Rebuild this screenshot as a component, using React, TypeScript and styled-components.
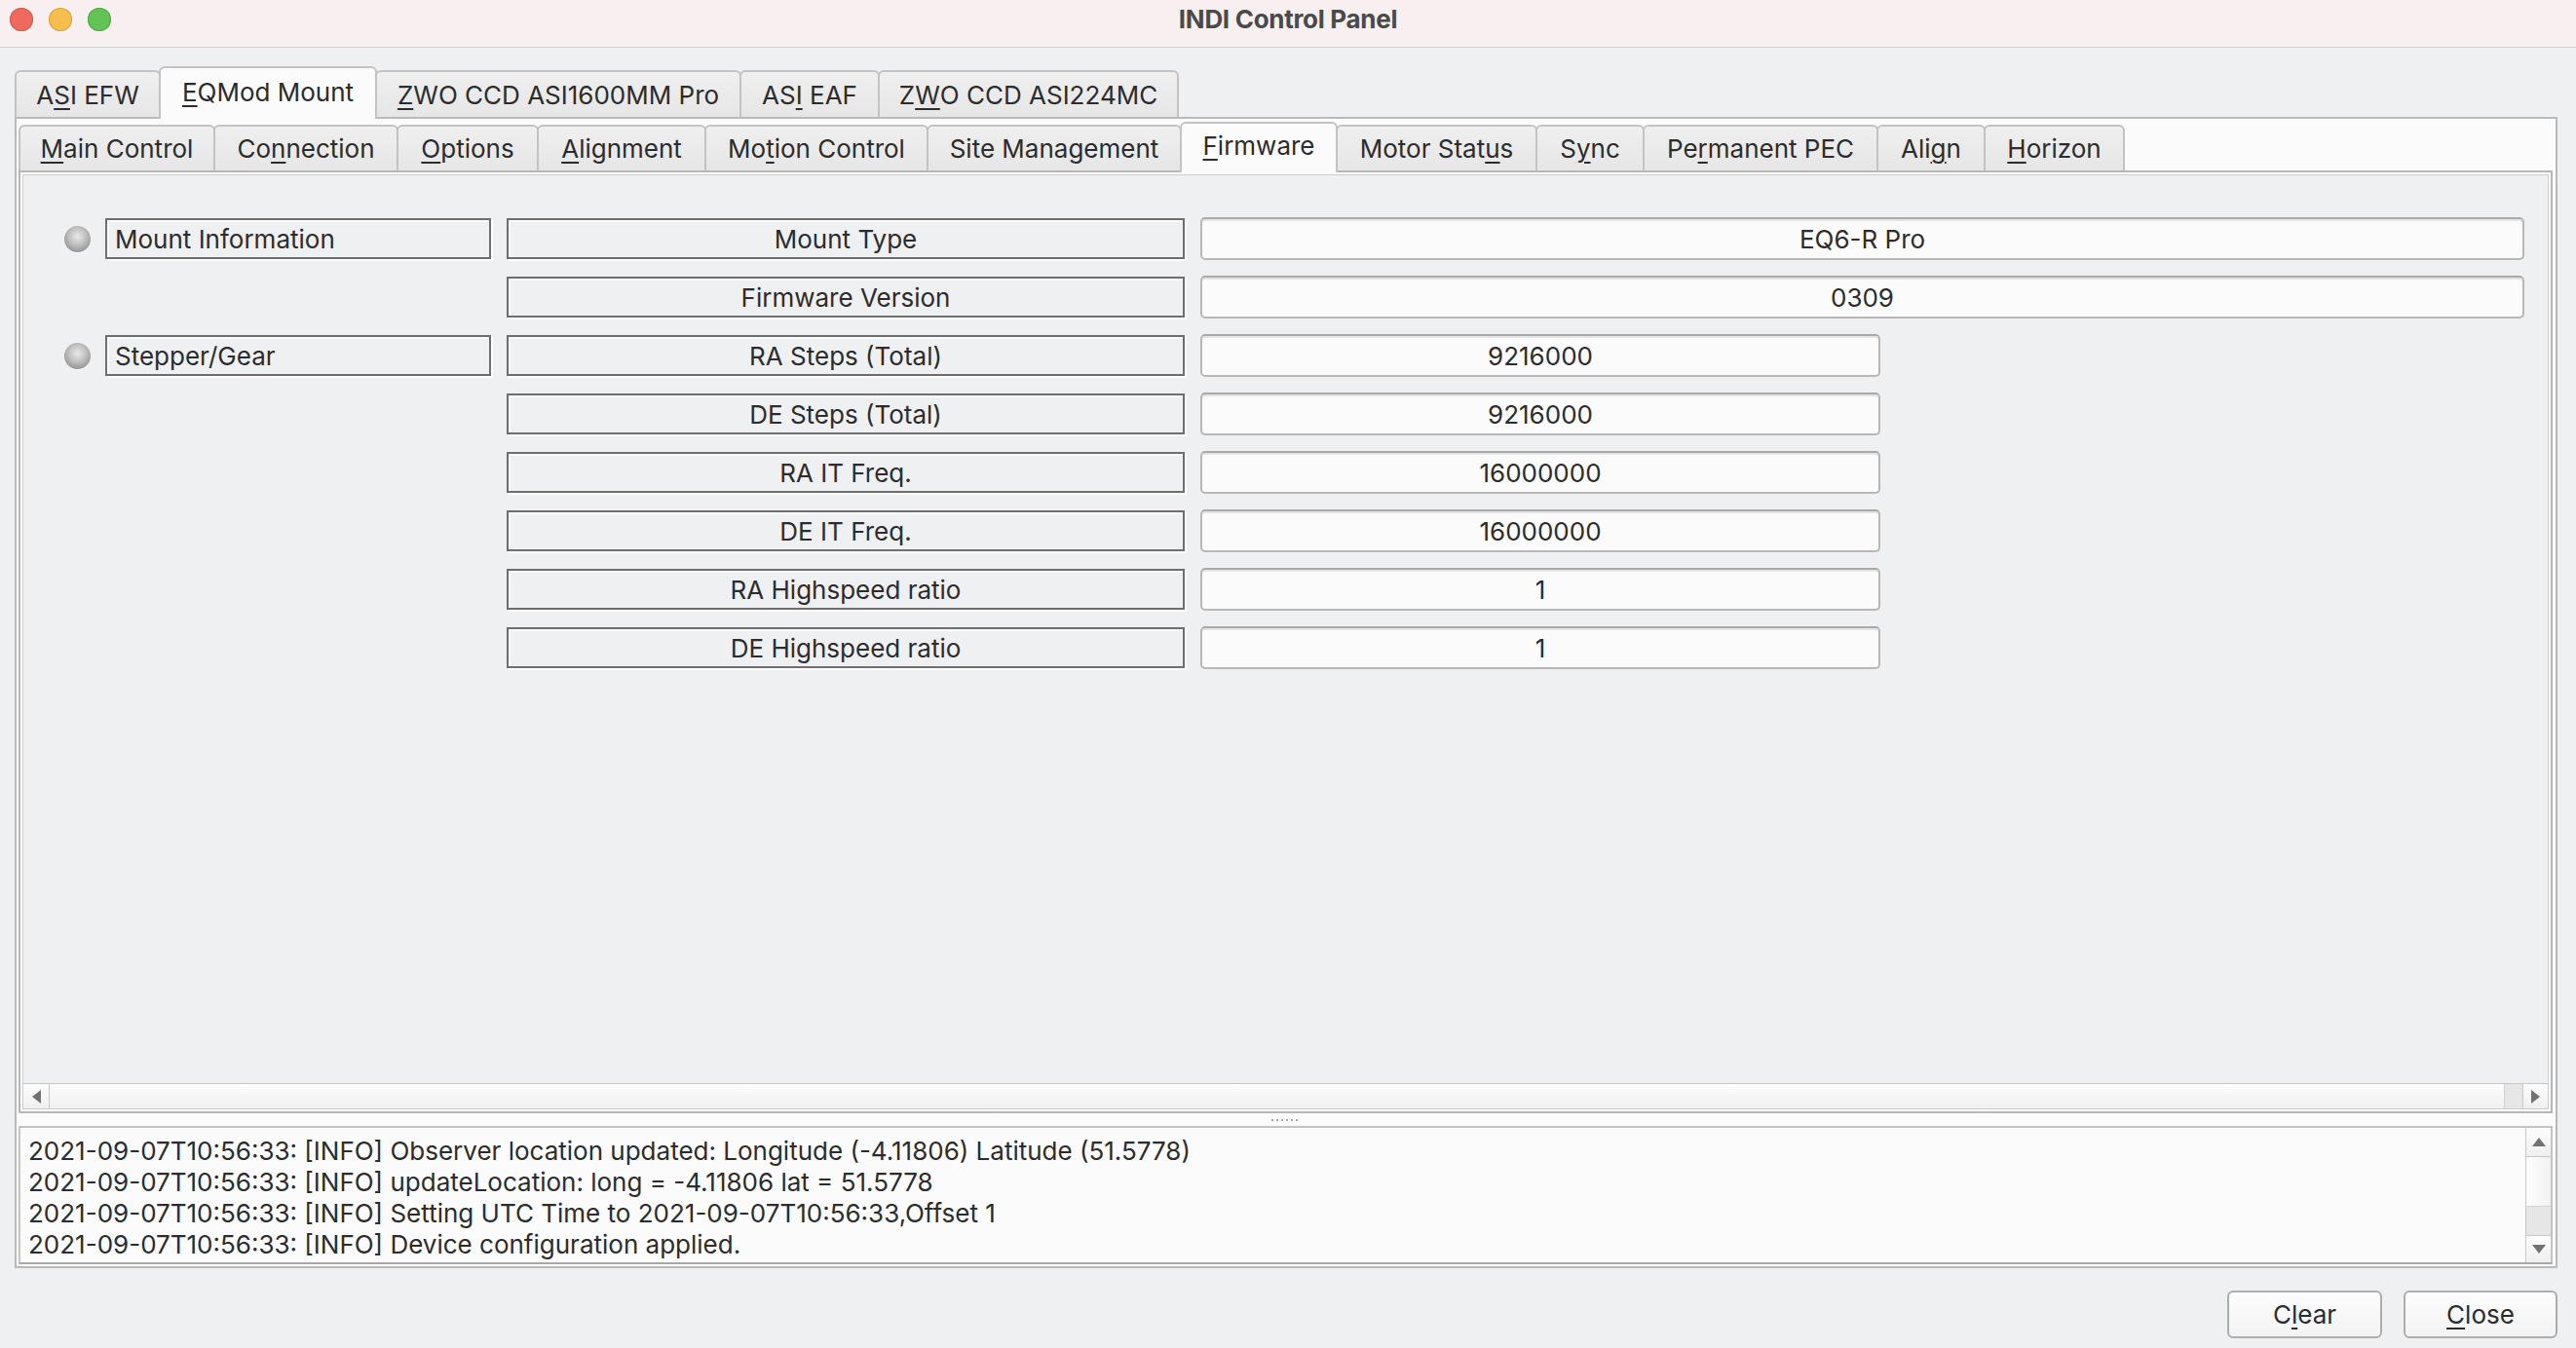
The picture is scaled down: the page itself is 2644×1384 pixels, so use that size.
import React from "react";
import styled, { createGlobalStyle, css } from "styled-components";

const GlobalStyle = createGlobalStyle`
  *, *::before, *::after { box-sizing: border-box; }
  html, body {
    margin: 0;
    padding: 0;
    width: 2644px;
    height: 1384px;
    overflow: hidden;
    background: #eff0f2;
  }
  body {
    font-family: Inter, "Noto Sans", "Liberation Sans", sans-serif;
    font-size: 26px;
    color: #2c2c2c;
  }
`;

const Window = styled.div`
  width: 2644px;
  height: 1384px;
  display: flex;
  flex-direction: column;
  background: #eff0f2;
`;

const TitleBar = styled.div`
  flex: none;
  height: 49px;
  display: grid;
  grid-template-columns: 1fr auto 1fr;
  align-items: start;
  padding-top: 8px;
  background: #f8eff0;
  border-bottom: 1px solid #d2cfd0;
`;

const Lights = styled.div`
  display: flex;
  gap: 16px;
  padding-left: 10px;
`;

const Light = styled.span<{ $c: string; $b: string }>`
  width: 24px;
  height: 24px;
  border-radius: 50%;
  background: ${(p) => p.$c};
  box-shadow: inset 0 0 0 1px ${(p) => p.$b};
`;

const Title = styled.div`
  font-weight: 700;
  font-size: 26px;
  line-height: 24px;
  color: #4a4a4a;
  letter-spacing: -0.3px;
`;

const Body = styled.div`
  flex: 1;
  display: flex;
  flex-direction: column;
  padding: 19px 19px 0 15px;
  min-height: 0;
`;

const tabBase = css<{ $active?: boolean; $w: number }>`
  flex: none;
  width: ${(p) => p.$w}px;
  display: flex;
  align-items: center;
  justify-content: center;
  white-space: nowrap;
  border: 2px solid #c3c3c3;
  border-bottom: none;
  border-radius: 6px 6px 0 0;
  background: ${(p) => (p.$active ? "#fbfbfb" : "linear-gradient(#efefef, #e6e6e6)")};
  & + & {
    margin-left: -2px;
  }
  ${(p) =>
    p.$active &&
    css`
      position: relative;
      z-index: 2;
      margin-bottom: -2px;
    `}
`;

const DeviceTabRow = styled.div`
  flex: none;
  height: 52px;
  display: flex;
  align-items: flex-end;
  position: relative;
  z-index: 1;
`;

const DeviceTab = styled.div<{ $active?: boolean; $w: number }>`
  ${tabBase};
  height: ${(p) => (p.$active ? 54 : 48)}px;
  padding-bottom: ${(p) => (p.$active ? 4 : 0)}px;
`;

const DevicePanel = styled.div`
  flex: 1;
  min-height: 0;
  display: flex;
  flex-direction: column;
  background: #fbfbfb;
  border: 2px solid #bababa;
  padding: 3px 3px 2px 2px;
`;

const GroupTabRow = styled.div`
  flex: none;
  height: 50px;
  display: flex;
  align-items: flex-end;
  position: relative;
  z-index: 1;
`;

const GroupTab = styled.div<{ $active?: boolean; $w: number }>`
  ${tabBase};
  height: ${(p) => (p.$active ? 52 : 47)}px;
  padding-bottom: ${(p) => (p.$active ? 5 : 0)}px;
`;

const Caption = styled.span`
  white-space: pre;
`;

const Mn = styled.span`
  text-decoration: underline;
  text-decoration-thickness: 2px;
  text-underline-offset: 4px;
`;

const GroupPanel = styled.div`
  flex: 1;
  min-height: 0;
  display: flex;
  border: 2px solid #b7b7b7;
  padding: 2px;
  background: #fbfbfb;
`;

const GroupInner = styled.div`
  flex: 1;
  display: flex;
  flex-direction: column;
  border: 1px solid #cdcdcd;
  background: #eff0f2;
`;

const Viewport = styled.div`
  flex: 1;
  min-height: 0;
  padding: 43px 0 0 42px;
`;

const PropList = styled.div`
  display: flex;
  flex-direction: column;
  gap: 16px;
`;

const PropRow = styled.div`
  display: grid;
  grid-template-columns: 26px 396px 696px 1359px;
  column-gap: 16px;
  height: 44px;
  align-items: center;
`;

const Led = styled.span`
  width: 27px;
  height: 27px;
  border-radius: 50%;
  background: radial-gradient(circle at 50% 40%, #e9e9e9 0%, #c2c2c2 40%, #8e8e8e 82%, #7c7c7c 100%);
  box-shadow: 0 2px 1px -1px rgba(255, 255, 255, 0.95);
`;

const etched = css`
  height: 42px;
  display: flex;
  align-items: center;
  background: #eff0f2;
  border: 2px solid #6e6e6e;
  box-shadow: 2px 2px 0 0 #ffffff, inset 2px 2px 0 0 #fbfbfb;
  white-space: nowrap;
`;

const GroupBox = styled.div`
  ${etched};
  padding-left: 8px;
`;

const LabelBox = styled.div`
  ${etched};
  justify-content: center;
`;

const ValueBox = styled.div<{ $wide?: boolean }>`
  width: ${(p) => (p.$wide ? 1359 : 698)}px;
  height: 44px;
  display: flex;
  align-items: center;
  justify-content: center;
  background: #fbfbfb;
  border: 2px solid #b7b7b7;
  border-top-color: #a9a9a9;
  border-radius: 5px;
  box-shadow: inset 0 2px 0 #e4e4e4;
`;

const HScroll = styled.div`
  flex: none;
  height: 26px;
  display: flex;
  border-top: 1px solid #c6c6c6;
`;

const ScrollBtn = styled.div<{ $side: "left" | "right" | "up" | "down" }>`
  flex: none;
  display: flex;
  align-items: center;
  justify-content: center;
  background: linear-gradient(#fdfdfd, #efefef);
  ${(p) => p.$side === "left" && css`width: 27px; border-right: 1px solid #c8c8c8;`}
  ${(p) => p.$side === "right" && css`width: 26px; border-left: 1px solid #c8c8c8;`}
  ${(p) => p.$side === "up" && css`height: 30px; border-bottom: 1px solid #c8c8c8;`}
  ${(p) => p.$side === "down" && css`height: 28px; border-top: 1px solid #c8c8c8;`}
`;

const HThumb = styled.div`
  flex: 1;
  background: linear-gradient(#fdfdfd, #f0f0f0);
`;

const HTrack = styled.div`
  flex: none;
  width: 19px;
  background: #e6e6e6;
  border-left: 1px solid #d2d2d2;
`;

const Splitter = styled.div`
  flex: none;
  height: 13px;
  display: flex;
  align-items: center;
  justify-content: center;
`;

const Grip = styled.span`
  width: 30px;
  height: 2px;
  background: repeating-linear-gradient(90deg, #a8a8a8 0 2px, transparent 2px 5px);
`;

const LogArea = styled.div`
  flex: none;
  height: 142px;
  display: flex;
  background: #fbfbfb;
  border: 2px solid #c4c4c4;
  border-bottom-color: #a8a8a8;
`;

const LogText = styled.div`
  flex: 1;
  padding: 8px 8px;
  line-height: 32px;
  white-space: pre;
  overflow: hidden;
`;

const VScroll = styled.div`
  flex: none;
  width: 26px;
  display: flex;
  flex-direction: column;
  border-left: 1px solid #c8c8c8;
`;

const VThumb = styled.div`
  flex: 1;
  background: linear-gradient(90deg, #fdfdfd, #f2f2f2);
`;

const VTrack = styled.div`
  flex: none;
  height: 30px;
  background: #e6e6e6;
  border-top: 1px solid #d2d2d2;
`;

const Footer = styled.div`
  flex: none;
  display: flex;
  justify-content: flex-end;
  gap: 22px;
  padding: 23px 19px 10px 0;
`;

const Button = styled.button<{ $w: number }>`
  width: ${(p) => p.$w}px;
  height: 49px;
  font: inherit;
  color: #2c2c2c;
  background: linear-gradient(#fcfcfc, #f3f3f3);
  border: 2px solid #adadad;
  border-radius: 6px;
  padding: 0;
`;

const Arrow = ({ dir }: { dir: "left" | "right" | "up" | "down" }) => {
  const pts = {
    left: "9,0 9,14 0,7",
    right: "0,0 0,14 9,7",
    up: "0,9 14,9 7,0",
    down: "0,0 14,0 7,9",
  }[dir];
  const horiz = dir === "left" || dir === "right";
  return (
    <svg width={horiz ? 9 : 14} height={horiz ? 14 : 9} viewBox={horiz ? "0 0 9 14" : "0 0 14 9"}>
      <polygon points={pts} fill="#727272" />
    </svg>
  );
};

const Text = ({ text, mn }: { text: string; mn: number }) =>
  mn < 0 ? (
    <Caption>{text}</Caption>
  ) : (
    <Caption>
      {text.slice(0, mn)}
      <Mn>{text[mn]}</Mn>
      {text.slice(mn + 1)}
    </Caption>
  );

const deviceTabs = [
  { label: "ASI EFW", mn: 1, w: 150 },
  { label: "EQMod Mount", mn: 0, w: 224, active: true },
  { label: "ZWO CCD ASI1600MM Pro", mn: 0, w: 376 },
  { label: "ASI EAF", mn: 2, w: 144 },
  { label: "ZWO CCD ASI224MC", mn: 1, w: 309 },
];

const groupTabs = [
  { label: "Main Control", mn: 0, w: 202 },
  { label: "Connection", mn: 2, w: 190 },
  { label: "Options", mn: 0, w: 146 },
  { label: "Alignment", mn: 0, w: 174 },
  { label: "Motion Control", mn: 2, w: 230 },
  { label: "Site Management", mn: -1, w: 262 },
  { label: "Firmware", mn: 0, w: 162, active: true },
  { label: "Motor Status", mn: 10, w: 207 },
  { label: "Sync", mn: 1, w: 112 },
  { label: "Permanent PEC", mn: 2, w: 242 },
  { label: "Align", mn: 3, w: 112 },
  { label: "Horizon", mn: 0, w: 145 },
];

const rows: { group?: string; label: string; value: string; wide?: boolean }[] = [
  { group: "Mount Information", label: "Mount Type", value: "EQ6-R Pro", wide: true },
  { label: "Firmware Version", value: "0309", wide: true },
  { group: "Stepper/Gear", label: "RA Steps (Total)", value: "9216000" },
  { label: "DE Steps (Total)", value: "9216000" },
  { label: "RA IT Freq.", value: "16000000" },
  { label: "DE IT Freq.", value: "16000000" },
  { label: "RA Highspeed ratio", value: "1" },
  { label: "DE Highspeed ratio", value: "1" },
];

const logLines = [
  "2021-09-07T10:56:33: [INFO] Observer location updated: Longitude (-4.11806) Latitude (51.5778)",
  "2021-09-07T10:56:33: [INFO] updateLocation: long = -4.11806 lat = 51.5778",
  "2021-09-07T10:56:33: [INFO] Setting UTC Time to 2021-09-07T10:56:33,Offset 1",
  "2021-09-07T10:56:33: [INFO] Device configuration applied.",
];

export default function App() {
  return (
    <Window>
      <GlobalStyle />
      <TitleBar>
        <Lights>
          <Light $c="#ee6a5f" $b="#d5594f" />
          <Light $c="#f5be4f" $b="#d9a43e" />
          <Light $c="#61c454" $b="#4fa943" />
        </Lights>
        <Title>INDI Control Panel</Title>
        <span />
      </TitleBar>
      <Body>
        <DeviceTabRow>
          {deviceTabs.map((t) => (
            <DeviceTab key={t.label} $w={t.w} $active={t.active}>
              <Text text={t.label} mn={t.mn} />
            </DeviceTab>
          ))}
        </DeviceTabRow>
        <DevicePanel>
          <GroupTabRow>
            {groupTabs.map((t) => (
              <GroupTab key={t.label} $w={t.w} $active={t.active}>
                <Text text={t.label} mn={t.mn} />
              </GroupTab>
            ))}
          </GroupTabRow>
          <GroupPanel>
            <GroupInner>
              <Viewport>
                <PropList>
                  {rows.map((r) => (
                    <PropRow key={r.label}>
                      {r.group ? <Led /> : <span />}
                      {r.group ? <GroupBox>{r.group}</GroupBox> : <span />}
                      <LabelBox>{r.label}</LabelBox>
                      <ValueBox $wide={r.wide}>{r.value}</ValueBox>
                    </PropRow>
                  ))}
                </PropList>
              </Viewport>
              <HScroll>
                <ScrollBtn $side="left">
                  <Arrow dir="left" />
                </ScrollBtn>
                <HThumb />
                <HTrack />
                <ScrollBtn $side="right">
                  <Arrow dir="right" />
                </ScrollBtn>
              </HScroll>
            </GroupInner>
          </GroupPanel>
          <Splitter>
            <Grip />
          </Splitter>
          <LogArea>
            <LogText>{logLines.join("\n")}</LogText>
            <VScroll>
              <ScrollBtn $side="up">
                <Arrow dir="up" />
              </ScrollBtn>
              <VThumb />
              <VTrack />
              <ScrollBtn $side="down">
                <Arrow dir="down" />
              </ScrollBtn>
            </VScroll>
          </LogArea>
        </DevicePanel>
      </Body>
      <Footer>
        <Button $w={159}>
          <Text text="Clear" mn={1} />
        </Button>
        <Button $w={158}>
          <Text text="Close" mn={0} />
        </Button>
      </Footer>
    </Window>
  );
}
